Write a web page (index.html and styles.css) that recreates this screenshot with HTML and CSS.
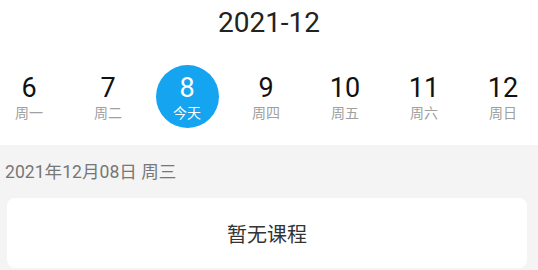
FILE: index.html
```html
<!DOCTYPE html>
<html lang="zh-CN">
<head>
  <meta charset="UTF-8">
  <meta name="viewport" content="width=device-width, initial-scale=1.0">
  <title>课程表</title>
  <link rel="stylesheet" href="styles.css">
</head>
<body>
  <div class="month">2021-12</div>
  <div class="week">
    <div class="day"><span class="num">6</span><span class="wd">周一</span></div>
    <div class="day"><span class="num">7</span><span class="wd">周二</span></div>
    <div class="day active"><span class="num">8</span><span class="wd">今天</span></div>
    <div class="day"><span class="num">9</span><span class="wd">周四</span></div>
    <div class="day"><span class="num">10</span><span class="wd">周五</span></div>
    <div class="day"><span class="num">11</span><span class="wd">周六</span></div>
    <div class="day"><span class="num">12</span><span class="wd">周日</span></div>
  </div>
  <div class="content">
    <div class="date">2021年12月08日 周三</div>
    <div class="card">暂无课程</div>
  </div>
</body>
</html>
```
FILE: styles.css
```css
* {margin: 0; padding: 0; box-sizing: border-box;}
body {
  width: 538px;
  height: 270px;
  overflow: hidden;
  background: #fff;
  font-family: Roboto, "Noto Sans CJK SC", sans-serif;
}
.month {
  height: 45px;
  line-height: 45px;
  text-align: center;
  font-size: 28px;
  color: #222;
}
.week {
  display: flex;
  gap: 21px;
  padding-top: 20px;
  height: 100px;
}
.day {
  width: 58px;
  height: 63px;
  display: flex;
  flex-direction: column;
  align-items: center;
  padding-top: 7px;
}
.day .num {
  font-size: 27px;
  line-height: 32px;
  color: #111;
}
.day .wd {
  font-size: 14px;
  line-height: 18px;
  color: #a0a0a0;
}
.day.active {
  width: 63px;
  margin: 0 -2.5px;
  border-radius: 50%;
  background: #14a4f0;
}
.day.active .num,
.day.active .wd {
  color: #fff;
}
.content {
  background: #f4f4f4;
  height: 125px;
  padding: 0 11px 0 7px;
}
.date {
  height: 53px;
  line-height: 55px;
  margin-left: -2px;
  font-size: 17.6px;
  color: #777;
}
.card {
  background: #fff;
  border-radius: 8px;
  height: 70px;
  display: flex;
  align-items: center;
  justify-content: center;
  font-size: 20px;
  color: #333;
}
```
